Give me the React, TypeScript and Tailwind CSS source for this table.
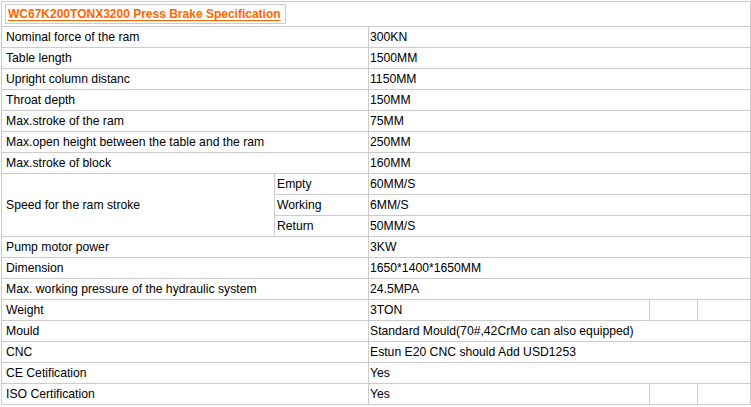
type SpecRow = {
  label: string
  value: string
  extra?: boolean
}

const TOP_ROWS: SpecRow[] = [
  { label: 'Nominal force of the ram', value: '300KN' },
  { label: 'Table length', value: '1500MM' },
  { label: 'Upright column distanc', value: '1150MM' },
  { label: 'Throat depth', value: '150MM' },
  { label: 'Max.stroke of the ram', value: '75MM' },
  { label: 'Max.open height between the table and the ram', value: '250MM' },
  { label: 'Max.stroke of block', value: '160MM' },
]

const SPEED_ROWS = [
  { sub: 'Empty', value: '60MM/S' },
  { sub: 'Working', value: '6MM/S' },
  { sub: 'Return', value: '50MM/S' },
]

const BOTTOM_ROWS: SpecRow[] = [
  { label: 'Pump motor power', value: '3KW' },
  { label: 'Dimension', value: '1650*1400*1650MM' },
  { label: 'Max. working pressure of the hydraulic system', value: '24.5MPA' },
  { label: 'Weight', value: '3TON', extra: true },
  { label: 'Mould', value: 'Standard Mould(70#,42CrMo can also equipped)' },
  { label: 'CNC', value: 'Estun E20 CNC should Add USD1253' },
  { label: 'CE Cetification', value: 'Yes' },
  { label: 'ISO Certification', value: 'Yes', extra: true },
]

const cell = 'border border-[#cccccc] p-0 leading-[20px] whitespace-nowrap overflow-hidden'

function Row({ row }: { row: SpecRow }) {
  return (
    <tr>
      <td colSpan={2} className={`${cell} pl-[4px]`}>
        {row.label}
      </td>
      {row.extra ? (
        <>
          <td className={`${cell} pl-[1px]`}>{row.value}</td>
          <td className={cell} />
          <td className={cell} />
        </>
      ) : (
        <td colSpan={3} className={`${cell} pl-[1px]`}>
          {row.value}
        </td>
      )}
    </tr>
  )
}

export default function App() {
  return (
    <div className="bg-white w-[751px] h-[407px] pt-px pl-px font-['Liberation_Sans',Arial,sans-serif] text-[12.2px] text-black">
      <table className="table-fixed border-collapse w-[749px]">
        <colgroup>
          <col className="w-[273px]" />
          <col className="w-[94px]" />
          <col className="w-[281px]" />
          <col className="w-[48px]" />
          <col className="w-[53px]" />
        </colgroup>
        <tbody>
          <tr>
            <td colSpan={5} className="border border-[#cccccc] h-[25px] p-0 pl-[3px] align-middle">
              <span className="inline-block border border-[#cccccc] pl-[2px] pr-[4px] leading-[18px] text-[12px] font-bold text-[#ff6600] underline underline-offset-2">
                WC67K200TONX3200 Press Brake Specification
              </span>
            </td>
          </tr>
          {TOP_ROWS.map((row) => (
            <Row key={row.label} row={row} />
          ))}
          {SPEED_ROWS.map((s, i) => (
            <tr key={s.sub}>
              {i === 0 && (
                <td rowSpan={3} className={`${cell} pl-[4px]`}>
                  Speed for the ram stroke
                </td>
              )}
              <td className={`${cell} pl-[2px]`}>{s.sub}</td>
              <td colSpan={3} className={`${cell} pl-[1px]`}>
                {s.value}
              </td>
            </tr>
          ))}
          {BOTTOM_ROWS.map((row) => (
            <Row key={row.label} row={row} />
          ))}
        </tbody>
      </table>
    </div>
  )
}
